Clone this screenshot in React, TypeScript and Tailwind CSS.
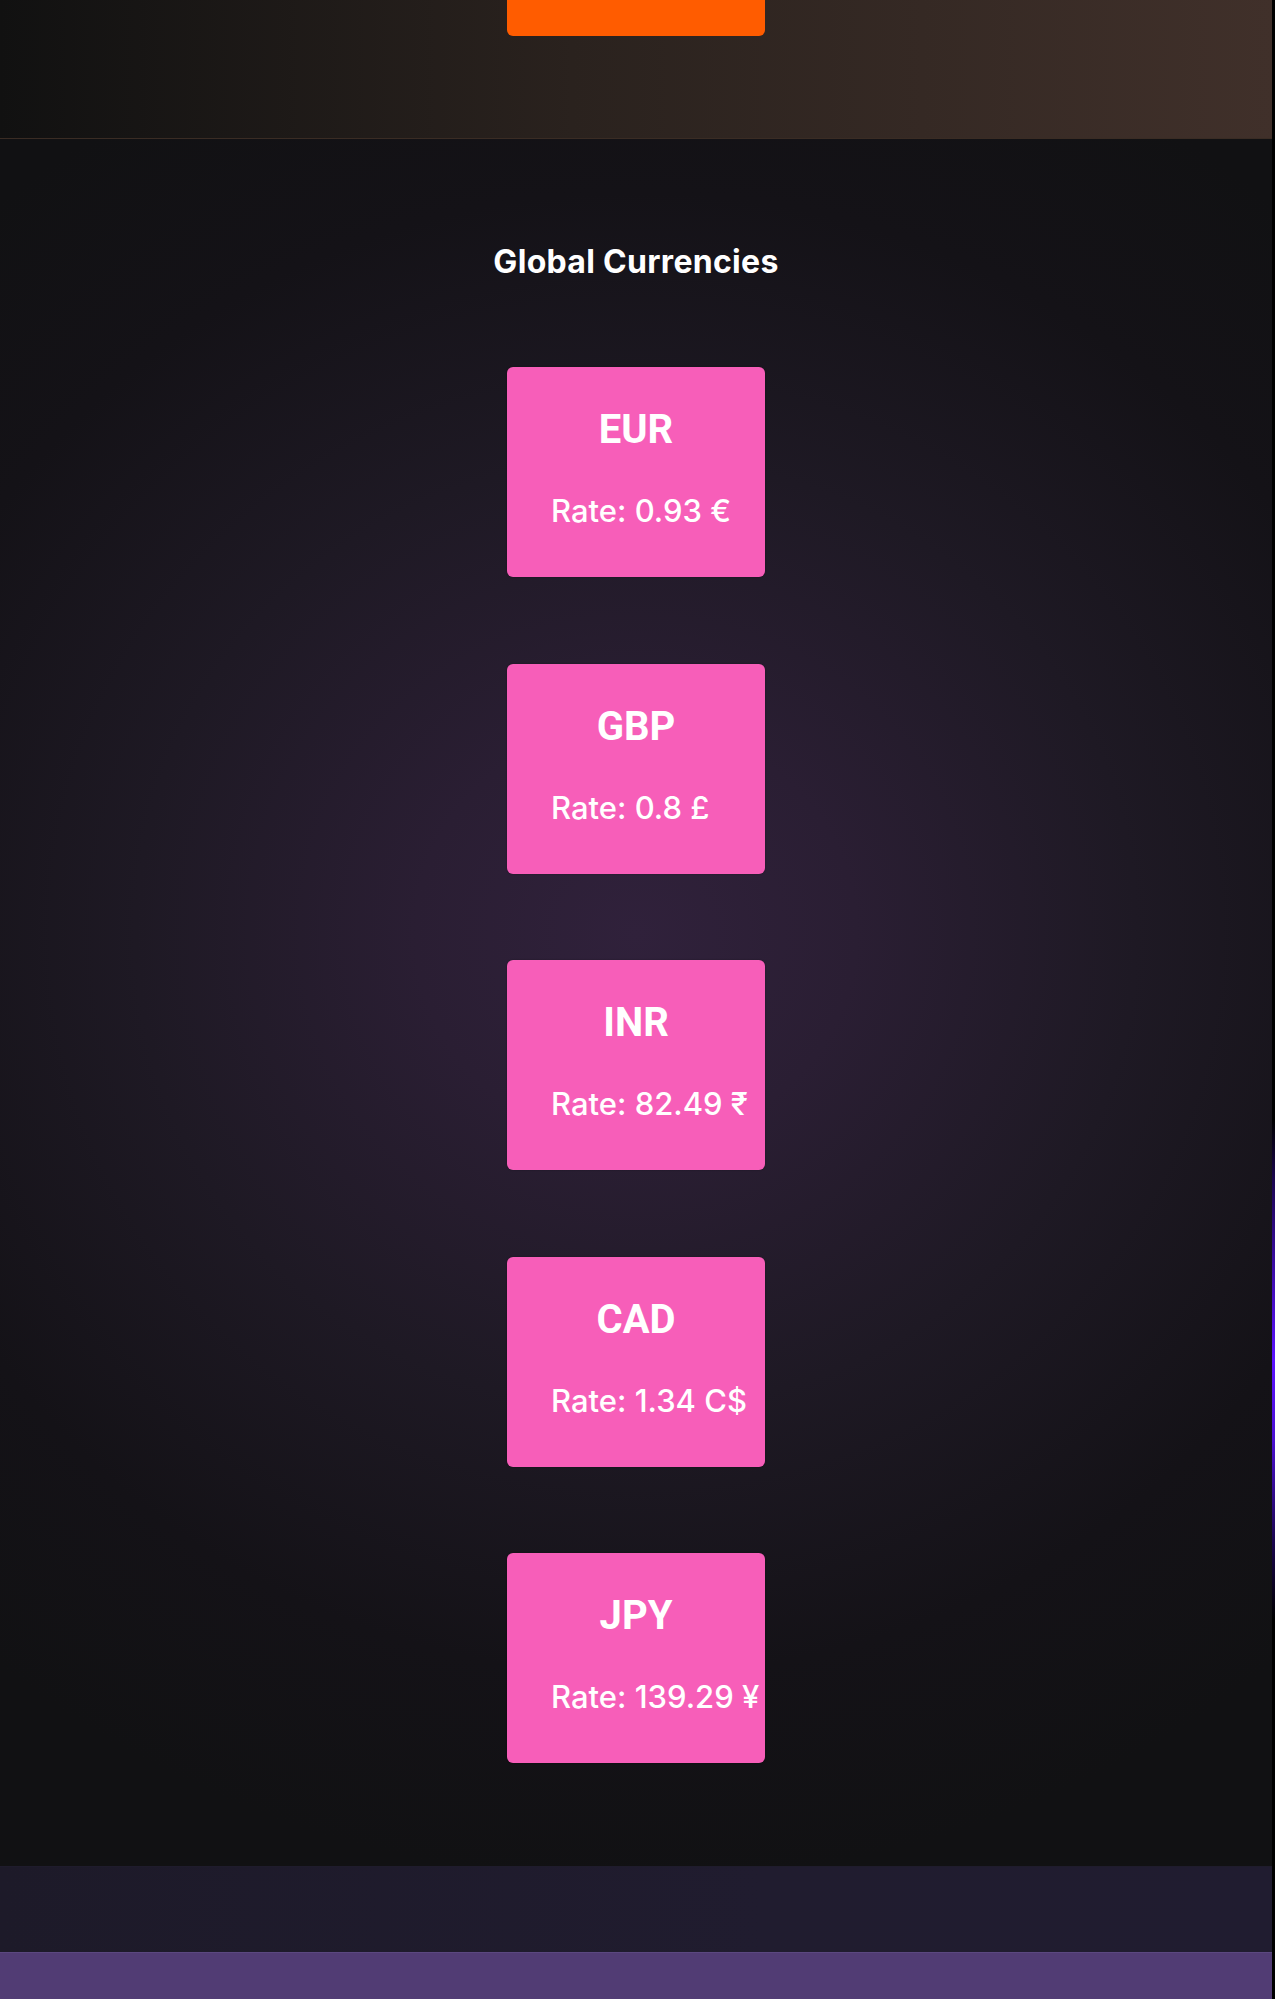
import React from "react";

const currencies = [
  { code: "EUR", rate: "0.93", sym: "€" },
  { code: "GBP", rate: "0.8", sym: "£" },
  { code: "INR", rate: "82.49", sym: "₹" },
  { code: "CAD", rate: "1.34", sym: "C$" },
  { code: "JPY", rate: "139.29", sym: "¥" },
];

function Card({ code, rate, sym }: { code: string; rate: string; sym: string }) {
  return (
    <div className="w-[258px] h-[210px] rounded-[6px] bg-[#f75eb9] pt-[39px] text-white shadow-[0_0_2px_rgba(0,0,0,0.3)]">
      <div className="h-[48px] text-center text-[40px] leading-[48px] font-bold font-['Roboto','Inter',sans-serif]">
        {code}
      </div>
      <div className="mt-[39px] pl-[44px] text-left text-[31px] leading-[36px] font-medium whitespace-nowrap font-['Inter','DejaVu_Sans',sans-serif]">
        Rate: {rate} {sym}
      </div>
    </div>
  );
}

export default function App() {
  return (
    <div className="flex w-full bg-black font-['Inter',sans-serif]">
      <div className="flex-1 min-w-0 flex flex-col">
        {/* top band */}
        <div className="h-[139px] bg-[linear-gradient(90deg,#111111_0%,#2a221e_45%,#40302a_100%)] border-b border-[#3a2c24] flex justify-center">
          <div className="w-[258px] h-[36px] rounded-b-[6px] bg-[#ff5c00]" />
        </div>

        {/* main section */}
        <section className="pt-[104px] pb-[103px] flex flex-col items-center bg-[radial-gradient(ellipse_1000px_950px_at_50%_46%,#30213b_0%,#2a1e33_22%,#1e1924_50%,#141217_78%,#111113_100%)]">
          <h2 className="h-[37px] text-[32px] leading-[37px] font-bold text-white tracking-[0.3px]">
            Global Currencies
          </h2>
          <div className="mt-[87px] flex flex-col items-center gap-[86.5px]">
            {currencies.map((c) => (
              <Card key={c.code} {...c} />
            ))}
          </div>
        </section>

        {/* footer */}
        <div className="h-[86px] bg-[linear-gradient(90deg,#1d1a29_0%,#201c2f_60%,#201c30_100%)] border-t border-[#1f1c2c]" />
        <div className="h-[48px] bg-[#513c74] border-t border-[#5b4880]" />
      </div>
      {/* right strip */}
      <div className="w-[3px] shrink-0 bg-[linear-gradient(180deg,#000000_0%,#000000_56%,#1b0650_59%,#5b12ff_68%,#4a10d0_72%,#1b0650_77%,#000000_81%,#000000_100%)]" />
    </div>
  );
}
